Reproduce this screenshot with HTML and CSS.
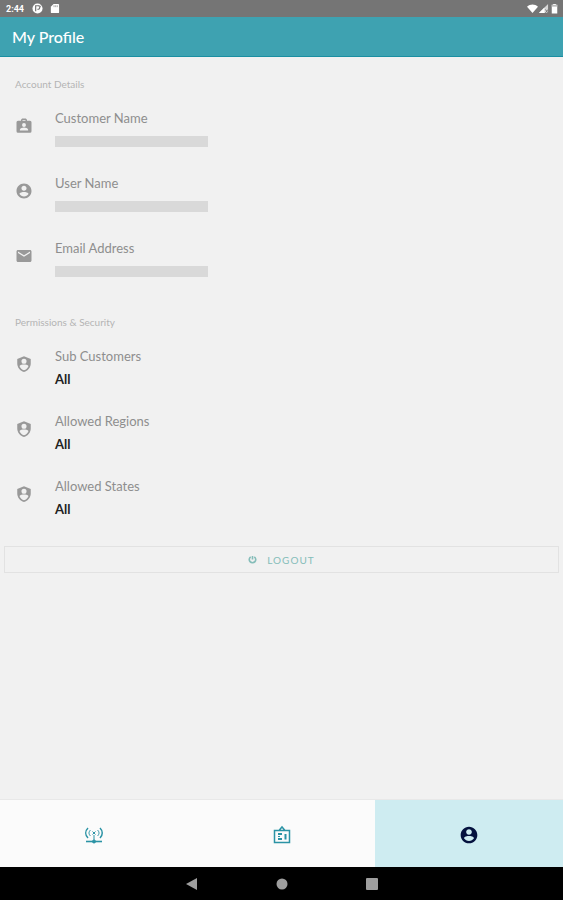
FILE: index.html
```html
<!DOCTYPE html>
<html lang="en">
<head>
  <meta charset="UTF-8" />
  <meta name="viewport" content="width=device-width, initial-scale=1.0" />
  <title>My Profile</title>
  <link rel="stylesheet" href="styles.css">
</head>
<body>
  <!-- shared icons -->
  <svg class="sprite" aria-hidden="true">
    <symbol id="icon-user" viewBox="0 0 24 24">
      <path d="M12 2C6.48 2 2 6.48 2 12s4.48 10 10 10 10-4.480 10-10S17.520 2 12 2zm0 3c1.900 0 3.400 1.500 3.400 3.400s-1.500 3.400-3.400 3.400-3.400-1.500-3.400-3.400S10.100 5 12 5zm0 14.200c-2.500 0-4.710-1.280-6-3.220.03-1.990 4-2.700 6-2.700 1.990 0 5.970.71 6 2.700-1.290 1.940-3.500 3.220-6 3.220z"/>
    </symbol>
    <symbol id="icon-shield" viewBox="0 0 24 24">
      <path fill-rule="evenodd" d="M12 1.500L3 5.200v6.100c0 5.300 3.800 10 9 11.300 5.200-1.300 9-6 9-11.300V5.200zM12 5a3.400 3.400 0 1 1 0 6.800A3.400 3.400 0 0 1 12 5zM6 14.500c1-1.300 4-1.900 6-1.900s5 .6 6 1.900c-1 2.800-3.300 5-6 5.900-2.700-.9-5-3.100-6-5.900z"/>
    </symbol>
  </svg>

  <div class="status-bar">
    <div class="status-group">
      <span class="time">2:44</span>
      <svg class="status-icon" viewBox="0 0 12 12"><circle cx="6" cy="6" r="5.500" fill="#fff"/><path d="M4 9V3h2.500a1.800 1.800 0 0 1 0 4H6M7 3l2.500 1" fill="none" stroke="#757575" stroke-width="1.300"/></svg>
      <svg class="status-icon" viewBox="0 0 12 12"><path d="M5 1h5a1 1 0 0 1 1 1v8a1 1 0 0 1-1 1H3a1 1 0 0 1-1-1V4z" fill="#fff"/><path d="M5.500 2.500v2M7.300 2.500v2M9 2.500v2" stroke="#8a8a8a" stroke-width=".8"/></svg>
    </div>
    <div class="status-group right">
      <svg class="status-icon" viewBox="0 0 12 12"><path d="M0 4C3.500.8 8.500.8 12 4L6 11z" fill="#fff"/></svg>
      <svg class="status-icon" viewBox="0 0 12 12"><path d="M11 1v10H1z" fill="#fff" opacity=".7"/><path d="M7 5v6H1z" fill="#fff"/><path d="M8 7l3 4M11 7l-3 4" stroke="#757575"/></svg>
      <svg class="status-icon" viewBox="0 0 12 12"><path d="M4.500 1h3v1H9v9.500H3V2h1.500z" fill="#fff"/><path d="M3 2h6v2H3z" fill="#bbb"/></svg>
    </div>
  </div>

  <header class="header">
    <h1>My Profile</h1>
  </header>

  <main class="main">
    <section class="section">
      <h2>Account Details</h2>
      <div class="row">
        <svg class="row-icon" viewBox="0 0 24 24"><path fill-rule="evenodd" d="M8 5V3.500L9.500 2h5L16 3.500V5h4a2 2 0 0 1 2 2v12a2 2 0 0 1-2 2H4a2 2 0 0 1-2-2V7a2 2 0 0 1 2-2zm2 0h4V4h-4zm2 3a2.600 2.600 0 1 0 0 5.200A2.600 2.600 0 0 0 12 8zm-5.500 10h11v-1c0-2-3.600-3-5.500-3s-5.500 1-5.500 3z"/></svg>
        <div class="field">
          <span class="label">Customer Name</span>
          <span class="value"><span class="placeholder"></span></span>
        </div>
      </div>
      <div class="row">
        <svg class="row-icon"><use href="#icon-user"/></svg>
        <div class="field">
          <span class="label">User Name</span>
          <span class="value"><span class="placeholder"></span></span>
        </div>
      </div>
      <div class="row">
        <svg class="row-icon" viewBox="0 0 24 24"><path d="M20 4H4c-1.100 0-2 .9-2 2v12c0 1.100.9 2 2 2h16c1.100 0 2-.9 2-2V6c0-1.100-.9-2-2-2zm0 4l-8 5-8-5V6l8 5 8-5z"/></svg>
        <div class="field">
          <span class="label">Email Address</span>
          <span class="value"><span class="placeholder"></span></span>
        </div>
      </div>
    </section>

    <section class="section">
      <h2>Permissions &amp; Security</h2>
      <div class="row">
        <svg class="row-icon"><use href="#icon-shield"/></svg>
        <div class="field">
          <span class="label">Sub Customers</span>
          <span class="value">All</span>
        </div>
      </div>
      <div class="row">
        <svg class="row-icon"><use href="#icon-shield"/></svg>
        <div class="field">
          <span class="label">Allowed Regions</span>
          <span class="value">All</span>
        </div>
      </div>
      <div class="row">
        <svg class="row-icon"><use href="#icon-shield"/></svg>
        <div class="field">
          <span class="label">Allowed States</span>
          <span class="value">All</span>
        </div>
      </div>
    </section>

    <button class="logout" type="button">
      <svg viewBox="0 0 10 10"><path d="M3 2a3.600 3.600 0 1 0 4 0M5 1v4" fill="none" stroke="currentColor" stroke-width="1.800"/></svg>
      LOGOUT
    </button>
  </main>

  <nav class="tabs">
    <button type="button" aria-label="Devices">
      <svg viewBox="0 0 20 20" fill="none" stroke="currentColor">
        <path d="M4 3C1 6 1 10 4 13M16 3c3 3 3 7 0 10" stroke-width="1.500"/>
        <path d="M6.500 5c-2 2-2 4 0 6M13.500 5c2 2 2 4 0 6M8.500 6.500l3 3M11.500 6.500l-3 3M10 10v5" stroke-width="1"/>
        <path d="M2 16.500h16" stroke-width="1.600"/>
        <circle cx="10" cy="16.500" r="1.500" fill="currentColor"/>
      </svg>
    </button>
    <button type="button" aria-label="Dashboard">
      <svg viewBox="0 0 20 20" fill="none" stroke="currentColor" stroke-width="1.500">
        <path d="M2.500 5.500h15v12h-15zM7 5.500L10 2l3 3.500"/>
        <path d="M6 9h4M6 14h4M13.500 9v5.500" stroke-width="2"/>
        <path d="M6 11.500h2" stroke-width="1"/>
      </svg>
    </button>
    <button class="active" type="button" aria-label="Profile">
      <svg><use href="#icon-user"/></svg>
    </button>
  </nav>

  <div class="system-bar">
    <button type="button" aria-label="Back"><svg viewBox="0 0 12 12"><path d="M0 6L11 0v12z"/></svg></button>
    <button type="button" aria-label="Home"><svg viewBox="0 0 12 12"><circle cx="6" cy="6" r="5.500"/></svg></button>
    <button type="button" aria-label="Recent apps"><svg viewBox="0 0 12 12"><rect width="12" height="12" rx="1"/></svg></button>
  </div>
</body>
</html>
```
FILE: styles.css
```css
* {
  box-sizing: border-box;
}
body {
  margin: 0;
  min-height: 100vh;
  display: flex;
  flex-direction: column;
  background-color: #f1f1f1;
  font-family: Lato, "Liberation Sans", sans-serif;
}
button {
  border: none;
  margin: 0;
  padding: 0;
  background: none;
  font-family: inherit;
  cursor: pointer;
}
svg {
  display: block;
}
.sprite {
  display: none;
}
.status-bar {
  height: 17px;
  padding: 0 3px 0 6px;
  display: flex;
  justify-content: space-between;
  align-items: center;
  background-color: #757575;
  color: white;
}
.status-group {
  display: flex;
  align-items: center;
  gap: 6px;
}
.status-group.right {
  gap: 0;
}
.time {
  margin-right: 2px;
  font-family: Roboto, sans-serif;
  font-size: 9px;
  font-weight: 700;
  line-height: 16px;
}
.status-icon {
  width: 11px;
  height: 11px;
}
.header {
  height: 40px;
  padding: 0 12px;
  display: flex;
  align-items: center;
  background-color: #3ea2b1;
  border-bottom: 1px solid #1a8fa2;
  color: white;
}
.header h1 {
  margin: 0;
  font-size: 16px;
  font-weight: 500;
  line-height: 24px;
}
.main {
  flex: 1;
  padding: 19px 4px;
}
.section {
  margin-bottom: 35px;
  padding: 0 11px;
  display: flex;
  flex-direction: column;
  gap: 26px;
}
.section:last-of-type {
  margin-bottom: 29px;
}
.section h2 {
  margin: 0 0 -8px;
  color: #b4b4b4;
  font-size: 10px;
  font-weight: 400;
  line-height: 16px;
}
.row {
  display: flex;
  gap: 22px;
}
.row-icon {
  width: 18px;
  height: 18px;
  margin-top: 7px;
  fill: #999;
}
.field {
  display: flex;
  flex-direction: column;
  gap: 7px;
}
.label {
  color: #8e8e8e;
  font-size: 13px;
  line-height: 16px;
}
.value {
  height: 16px;
  display: flex;
  align-items: center;
  color: #222;
  font-size: 13px;
  font-weight: 700;
  line-height: 16px;
}
.placeholder {
  width: 153px;
  height: 11px;
  background-color: #d9d9d9;
}
.logout {
  width: 100%;
  height: 27px;
  display: flex;
  justify-content: center;
  align-items: center;
  gap: 10px;
  border: 1px solid #e2e2e2;
  color: #85bdb9;
  font-size: 10px;
  letter-spacing: 1px;
}
.logout svg {
  width: 9px;
  height: 9px;
}
.tabs {
  height: 68px;
  display: flex;
  border-top: 1px solid #e8e8e8;
  background-color: #fbfbfb;
}
.tabs button {
  flex: 1;
  display: flex;
  justify-content: center;
  align-items: center;
  color: #2b93a5;
}
.tabs button.active {
  background-color: #ceecf1;
  color: #05123f;
}
.tabs svg {
  width: 20px;
  height: 20px;
  margin-top: 2px;
}
.tabs .active svg {
  fill: currentColor;
}
.system-bar {
  height: 33px;
  display: flex;
  justify-content: center;
  align-items: center;
  gap: 78px;
  background-color: black;
}
.system-bar svg {
  width: 12px;
  height: 12px;
  fill: #9e9e9e;
}
```
